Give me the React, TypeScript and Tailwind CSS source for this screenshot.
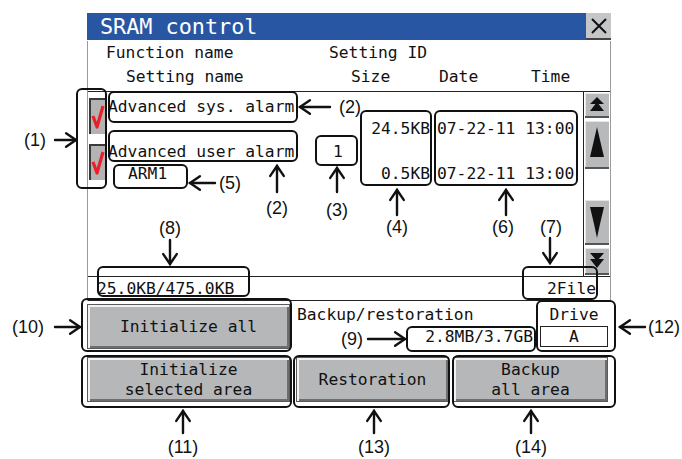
import React from "react";

const mono = "font-['DejaVu_Sans_Mono',monospace]";

const callouts = [
  { x: 76, y: 88, w: 31, h: 101 },
  { x: 108, y: 91, w: 190, h: 32 },
  { x: 108, y: 130, w: 190, h: 32 },
  { x: 113, y: 164, w: 75, h: 25 },
  { x: 315, y: 135, w: 43, h: 31 },
  { x: 360, y: 110, w: 72, h: 76 },
  { x: 434, y: 110, w: 144, h: 76 },
  { x: 97, y: 266, w: 153, h: 31 },
  { x: 522, y: 266, w: 76, h: 34 },
  { x: 81, y: 298, w: 211, h: 54 },
  { x: 406, y: 326, w: 130, h: 26 },
  { x: 536, y: 300, w: 80, h: 52 },
  { x: 81, y: 355, w: 211, h: 53 },
  { x: 293, y: 355, w: 157, h: 53 },
  { x: 452, y: 355, w: 164, h: 53 }
];

const labels = [
  { t: "(1)", x: 35, y: 140 },
  { t: "(2)", x: 350, y: 107 },
  { t: "(2)", x: 277, y: 208 },
  { t: "(3)", x: 337, y: 210 },
  { t: "(4)", x: 397, y: 227 },
  { t: "(5)", x: 230, y: 183 },
  { t: "(6)", x: 503, y: 227 },
  { t: "(7)", x: 551, y: 227 },
  { t: "(8)", x: 170, y: 228 },
  { t: "(9)", x: 352, y: 339 },
  { t: "(10)", x: 28, y: 327 },
  { t: "(11)", x: 183, y: 447 },
  { t: "(12)", x: 664, y: 327 },
  { t: "(13)", x: 374, y: 447 },
  { t: "(14)", x: 531, y: 447 }
];

// [x1, y1, x2, y2] with the head at x2, y2
const arrows = [
  [55, 140, 76, 140],
  [330, 107, 300, 107],
  [277, 192, 277, 166],
  [337, 192, 337, 168],
  [397, 215, 397, 190],
  [215, 183, 190, 183],
  [506, 215, 506, 190],
  [550, 238, 550, 263],
  [170, 240, 170, 264],
  [368, 339, 405, 339],
  [55, 327, 80, 327],
  [183, 433, 183, 411],
  [645, 327, 620, 327],
  [374, 433, 374, 411],
  [531, 433, 531, 411]
];

function Arrow ({ a }: { a: number[] }) {
  const [x1, y1, x2, y2] = a;
  const ang = Math.atan2(y2 - y1, x2 - x1);
  const len = 12;
  const spread = 0.6;
  const hx1 = x2 - len * Math.cos(ang - spread);
  const hy1 = y2 - len * Math.sin(ang - spread);
  const hx2 = x2 - len * Math.cos(ang + spread);
  const hy2 = y2 - len * Math.sin(ang + spread);
  return (
    <g stroke="#111" strokeWidth="2.4" fill="none" strokeLinecap="round">
      <line x1={x1} y1={y1} x2={x2} y2={y2} />
      <polyline points={`${hx1},${hy1} ${x2},${y2} ${hx2},${hy2}`} />
    </g>
  );
}

function CheckBox () {
  return (
    <div className="w-[16px] h-[36px] bg-[#b3b3b3] border-t-2 border-l-2 border-[#3a3a3a] flex items-center justify-center">
      <svg width="14" height="26" viewBox="0 0 14 26">
        <path d="M2 12 L6 23 L12 2" stroke="#e8202a" strokeWidth="3.2" fill="none" strokeLinejoin="round" />
      </svg>
    </div>
  );
}

function Btn ({ children, className }: { children: React.ReactNode; className: string }) {
  return (
    <div
      className={`${className} bg-[#b5b7b9] border border-[#5a5a5a] shadow-[inset_2px_2px_0_#f2f2f2,inset_-2px_-2px_0_#6e6e6e] flex items-center justify-center text-center leading-[20px]`}
    >
      {children}
    </div>
  );
}

function ScrollBtn ({ h, children }: { h: string; children: React.ReactNode }) {
  return (
    <div className={`${h} bg-[#b7b9bb] border-b-2 border-[#555] shadow-[inset_1px_1px_0_#e6e6e6] flex items-center justify-center`}>
      {children}
    </div>
  );
}

export default function App () {
  return (
    <div className={`relative w-[682px] h-[459px] bg-white overflow-hidden text-[#111] ${mono}`}>
      {/* Screen panel */}
      <div className="ml-[87px] pt-[13px] w-[524px] text-[16.3px]">
        {/* Title bar */}
        <div className="flex h-[27px]">
          <div className="flex-1 bg-[#2856a3] text-white text-[21.8px] leading-[27px] pl-[13px]">SRAM control</div>
          <div className="w-[25px] bg-[#c4c6c8] border-b-2 border-[#444] flex items-center justify-center">
            <svg width="18" height="18" viewBox="0 0 18 18">
              <path d="M2 2 L16 16 M16 2 L2 16" stroke="#111" strokeWidth="2" />
            </svg>
          </div>
        </div>

        <div className="border-x border-[#9a9a9a]">
          {/* Header */}
          <div className="h-[50px] leading-[24px]">
            <div className="flex h-[24px] mt-[1px]">
              <span className="w-[241px] pl-[18px]">Function name</span>
              <span>Setting ID</span>
            </div>
            <div className="flex h-[24px]">
              <span className="w-[263px] pl-[38px]">Setting name</span>
              <span className="w-[88px]">Size</span>
              <span className="w-[92px]">Date</span>
              <span>Time</span>
            </div>
          </div>

          {/* List */}
          <div className="flex h-[186px] border-y border-[#222]">
            <div className="flex-1 pt-[4px] leading-[22px]">
              <div className="flex h-[45px]">
                <div className="ml-[1px] mt-[2px]"><CheckBox /></div>
                <div className="flex-1 pl-[3px]">
                  <div className="h-[22px]">Advanced sys. alarm</div>
                  <div className="flex h-[22px]">
                    <span className="w-[322px] text-right">24.5KB</span>
                    <span className="ml-[7px]">07-22-11 13:00</span>
                  </div>
                </div>
              </div>
              <div className="flex h-[45px]">
                <div className="ml-[1px] mt-[3px]"><CheckBox /></div>
                <div className="flex-1 pl-[3px]">
                  <div className="flex h-[22px]">
                    <span className="w-[225px]">Advanced user alarm</span>
                    <span>1</span>
                  </div>
                  <div className="flex h-[22px]">
                    <span className="w-[322px] flex justify-between">
                      <span className="pl-[20px]">ARM1</span>
                      <span>0.5KB</span>
                    </span>
                    <span className="ml-[7px]">07-22-11 13:00</span>
                  </div>
                </div>
              </div>
            </div>

            {/* Scrollbar */}
            <div className="w-[27px] border-l border-[#222] flex flex-col gap-[3px] pt-[1px] pl-[1px] pr-[1px]">
              <ScrollBtn h="h-[25px]">
                <svg width="16" height="17" viewBox="0 0 16 17">
                  <path d="M8 1 L15 8 L1 8 Z M8 6 L15 15 L1 15 Z" fill="#111" />
                </svg>
              </ScrollBtn>
              <ScrollBtn h="h-[48px]">
                <svg width="16" height="36" viewBox="0 0 16 36">
                  <path d="M8 1 L11 14 L15 31 L1 31 L5 14 Z" fill="#111" />
                </svg>
              </ScrollBtn>
              <div className="h-[25px] bg-white" />
              <ScrollBtn h="h-[45px]">
                <svg width="16" height="36" viewBox="0 0 16 36">
                  <path d="M1 3 L15 3 L11 20 L8 34 L5 20 Z" fill="#111" />
                </svg>
              </ScrollBtn>
              <ScrollBtn h="h-[27px]">
                <svg width="16" height="17" viewBox="0 0 16 17">
                  <path d="M1 1 L15 1 L8 9 Z M1 7 L15 7 L8 16 Z" fill="#111" />
                </svg>
              </ScrollBtn>
            </div>
          </div>

          {/* Status row */}
          <div className="flex justify-between items-end h-[24px] leading-[22px] border-b border-[#222] pl-[9px] pr-[14px]">
            <span>25.0KB/475.0KB</span>
            <span>2File</span>
          </div>
        </div>

        {/* Bottom area, row 1 */}
        <div className="flex h-[51px]">
          <div className="w-[206px] pr-[3px] py-[3px]">
            <Btn className="h-full">Initialize all</Btn>
          </div>
          <div className="w-[244px] pl-[4px] pr-[4px] leading-[22px] flex flex-col">
            <span className="mt-[3px]">Backup/restoration</span>
            <span className="text-right">2.8MB/3.7GB</span>
          </div>
          <div className="flex-1 flex flex-col items-center leading-[22px] pl-[3px] pr-[3px]">
            <span className="mt-[3px]">Drive</span>
            <div className="w-full h-[21px] border border-[#222] text-center leading-[20px]">A</div>
          </div>
        </div>

        {/* Bottom area, row 2 */}
        <div className="flex h-[54px] pt-[5px] pb-[4px]">
          <Btn className="w-[203px]">
            <span>Initialize<br />selected area</span>
          </Btn>
          <Btn className="w-[153px] ml-[6px]">Restoration</Btn>
          <Btn className="w-[155px] ml-[4px]">
            <span>Backup<br />all area</span>
          </Btn>
        </div>
      </div>

      {/* Callout boxes */}
      {callouts.map((c, i) => (
        <div
          key={i}
          className="absolute border-2 border-[#111] rounded-[6px] pointer-events-none"
          style={{ left: c.x, top: c.y, width: c.w, height: c.h }}
        />
      ))}

      {/* Callout arrows */}
      <svg className="absolute left-0 top-0 pointer-events-none" width="682" height="459">
        {arrows.map((a, i) => <Arrow key={i} a={a} />)}
      </svg>

      {/* Callout labels */}
      {labels.map((l, i) => (
        <div
          key={i}
          className="absolute -translate-x-1/2 -translate-y-1/2 font-['Liberation_Sans',sans-serif] text-[18px] leading-[20px]"
          style={{ left: l.x, top: l.y }}
        >
          {l.t}
        </div>
      ))}
    </div>
  );
}
